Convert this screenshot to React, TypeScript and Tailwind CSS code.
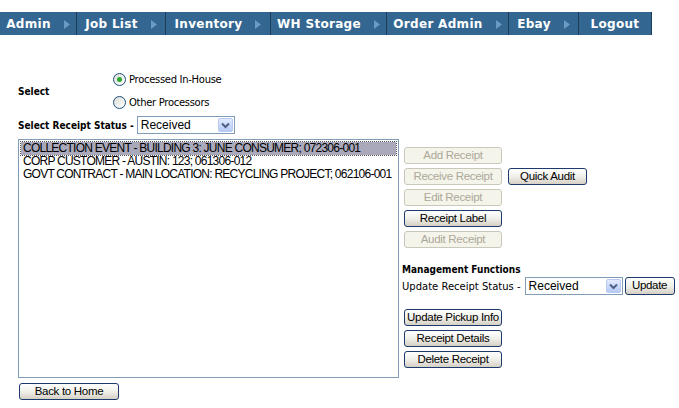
import React from 'react';

const navItems = [
  { label: 'Admin', w: 'w-[77px]' },
  { label: 'Job List', w: 'w-[89px]' },
  { label: 'Inventory', w: 'w-[105px]' },
  { label: 'WH Storage', w: 'w-[116px]' },
  { label: 'Order Admin', w: 'w-[122px]' },
  { label: 'Ebay', w: 'w-[70px]' },
  { label: 'Logout', w: 'w-[73px]', last: true },
];

const receipts = [
  'COLLECTION EVENT - BUILDING 3: JUNE CONSUMER; 072306-001',
  'CORP CUSTOMER - AUSTIN: 123; 061306-012',
  'GOVT CONTRACT - MAIN LOCATION: RECYCLING PROJECT; 062106-001',
];

function XpButton({ children, disabled, className }: { children: React.ReactNode; disabled?: boolean; className?: string }) {
  const base = 'flex items-center justify-center whitespace-nowrap h-[17px] rounded-[3px] border text-[11.5px] tracking-[-0.3px] leading-none font-[Liberation_Sans,Arial,sans-serif] ';
  const look = disabled
    ? 'border-[#cac8bb] bg-[#f5f4ea] text-[#aca899]'
    : 'border-[#1c3a6b] bg-gradient-to-b from-[#ffffff] via-[#f0f0ea] to-[#d6d0c5] text-black';
  return <div className={base + look + ' ' + (className || '')}>{children}</div>;
}

function XpSelect({ className }: { className?: string }) {
  return (
    <div className={'flex h-[18px] border border-[#7f9db9] bg-white ' + (className || '')}>
      <div className="flex-1 pl-[3px] text-[12px] leading-[16px] font-[Liberation_Sans,Arial,sans-serif] text-black">Received</div>
      <div className="m-[1px] flex w-[15px] items-center justify-center rounded-[2px] border border-[#b9c9ef] bg-gradient-to-b from-[#e2ebff] to-[#b6caf5]">
        <svg width="9" height="7" viewBox="0 0 9 7">
          <path d="M1 1.5 L4.5 5 L8 1.5" fill="none" stroke="#4d6185" strokeWidth="2" />
        </svg>
      </div>
    </div>
  );
}

function Radio({ checked }: { checked?: boolean }) {
  return (
    <div className="flex h-[13px] w-[13px] items-center justify-center rounded-full border border-[#1c5180] bg-gradient-to-br from-[#dcdcd7] to-[#ffffff]">
      {checked && <div className="h-[5px] w-[5px] rounded-full bg-[#2fa82f]" />}
    </div>
  );
}

const boldLabel = 'text-[10px] font-bold font-[DejaVu_Sans_Condensed,Tahoma,sans-serif]';

export default function App() {
  return (
    <div className="h-[408px] w-[679px] overflow-hidden bg-white font-[DejaVu_Sans,Verdana,sans-serif] text-black">
      <div className="mt-[12px] flex h-[23px] w-[652px] bg-[#336791]">
        {navItems.map((n) => (
          <div
            key={n.label}
            className={'flex h-full items-center justify-center gap-[13px] border-r border-[#1d3c57] pt-[1px] ' + n.w}
          >
            <span className="text-[12px] font-bold tracking-[0.3px] text-white">{n.label}</span>
            {!n.last && (
              <svg width="6" height="9" viewBox="0 0 6 9">
                <path d="M0 0 L6 4.5 L0 9 Z" fill="#6b9bc5" />
              </svg>
            )}
          </div>
        ))}
      </div>

      <div className="pl-[18px]">
        <div className="mt-[37px] flex">
          <div className={'w-[95px] self-center ' + boldLabel}>Select</div>
          <div className="flex flex-col gap-[8px]">
            <div className="flex items-center gap-[3px] text-[10px] tracking-[-0.3px]">
              <Radio checked />
              <span>Processed In-House</span>
            </div>
            <div className="flex items-center gap-[3px] text-[10px] tracking-[-0.3px]">
              <Radio />
              <span>Other Processors</span>
            </div>
          </div>
        </div>

        <div className="mt-[6px] flex items-center">
          <span className={boldLabel}>Select Receipt Status -</span>
          <XpSelect className="ml-[3px] w-[98px]" />
        </div>

        <div className="mt-[5px] flex">
          <div className="h-[239px] w-[381px] border border-[#7f9db9] p-[2px] whitespace-nowrap font-[Liberation_Sans,Arial,sans-serif] text-[12px] tracking-[-0.75px] leading-[13px]">
            {receipts.map((r, i) => (
              <div key={r} className={'pl-[2px] ' + (i === 0 ? 'bg-[#a9a9bb] outline-1 outline-dotted outline-[#555]' : '')}>
                {r}
              </div>
            ))}
          </div>

          <div className="ml-[3px] flex flex-col">
            <div className="mt-[8px] flex">
              <div className="flex flex-col gap-[4px] pl-[2px]">
                <XpButton disabled className="w-[98px]">Add Receipt</XpButton>
                <XpButton disabled className="w-[98px]">Receive Receipt</XpButton>
                <XpButton disabled className="w-[98px]">Edit Receipt</XpButton>
                <XpButton className="w-[98px]">Receipt Label</XpButton>
                <XpButton disabled className="w-[98px]">Audit Receipt</XpButton>
              </div>
              <XpButton className="ml-[6px] mt-[21px] w-[79px]">Quick Audit</XpButton>
            </div>

            <div className={'mt-[14px] ' + boldLabel}>Management Functions</div>
            <div className="flex items-center">
              <span className="text-[10px]">Update Receipt Status -</span>
              <XpSelect className="ml-[4px] w-[98px]" />
              <XpButton className="ml-[2px] h-[18px] w-[50px]">Update</XpButton>
            </div>

            <div className="mt-[14px] flex flex-col gap-[4px] pl-[2px]">
              <XpButton className="w-[98px]">Update Pickup Info</XpButton>
              <XpButton className="w-[98px]">Receipt Details</XpButton>
              <XpButton className="w-[98px]">Delete Receipt</XpButton>
            </div>
          </div>
        </div>

        <XpButton className="ml-[1px] mt-[5px] w-[100px]">Back to Home</XpButton>
      </div>
    </div>
  );
}
